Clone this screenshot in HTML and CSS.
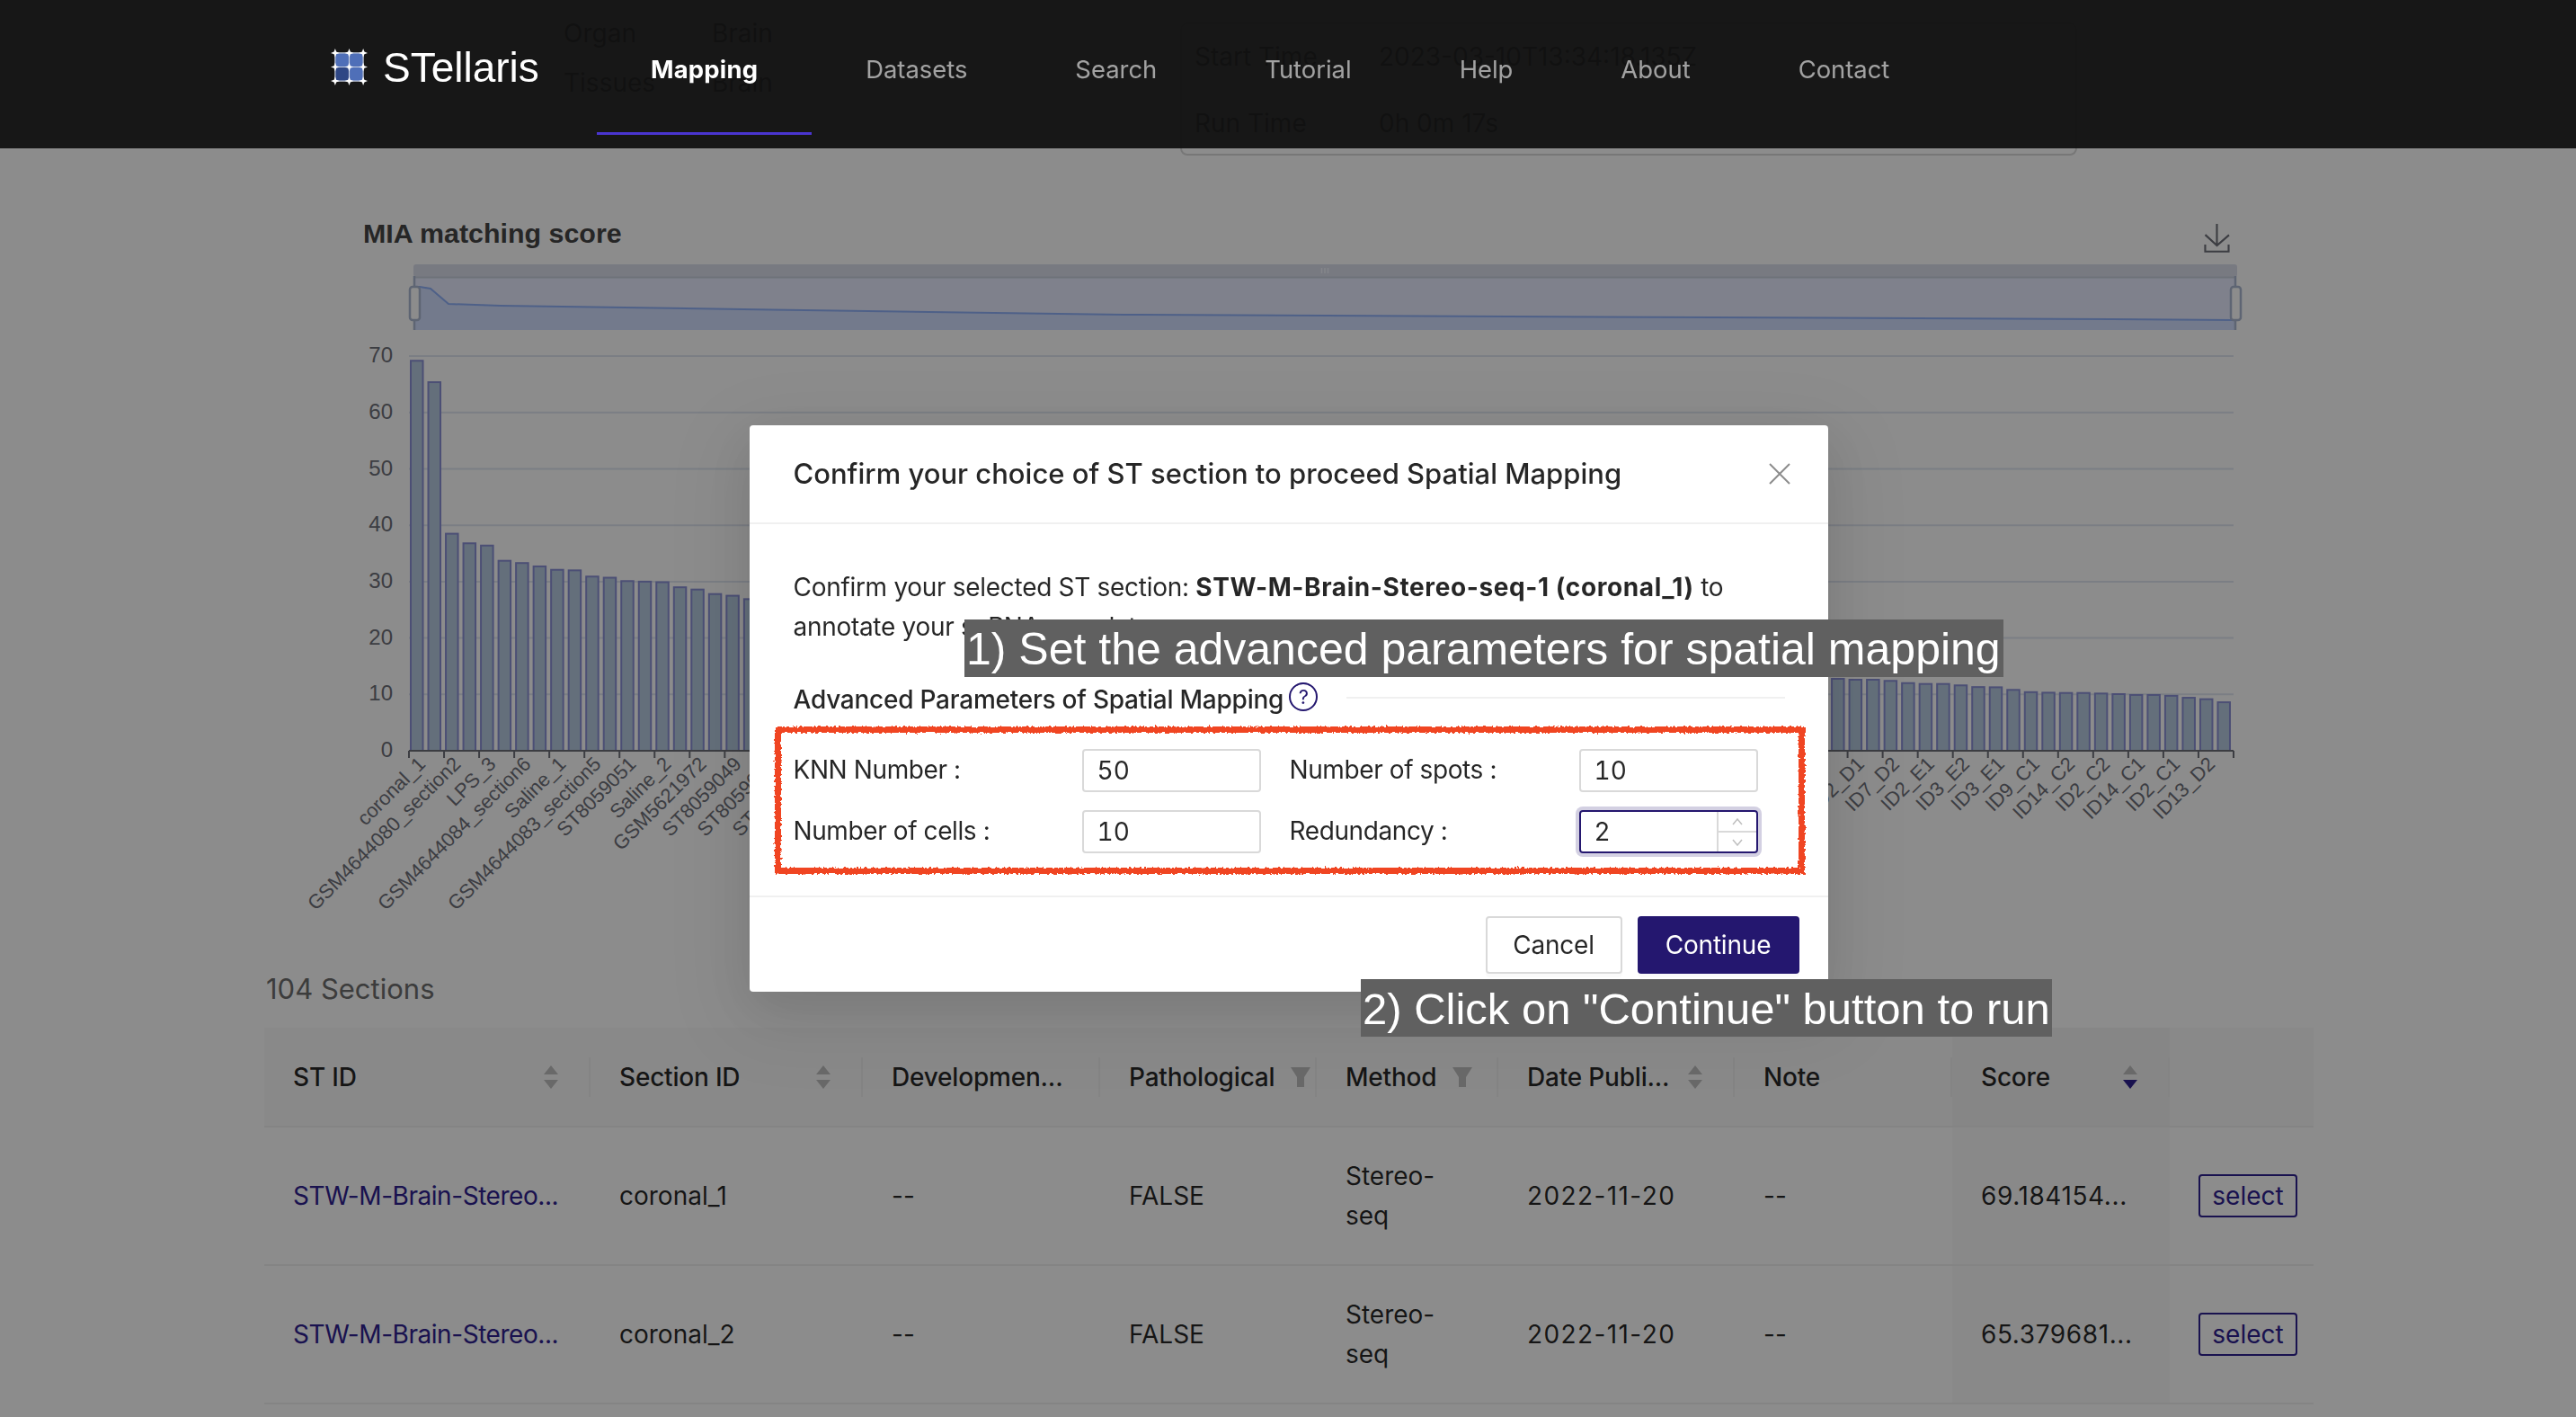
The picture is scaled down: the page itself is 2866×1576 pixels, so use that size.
FILE: index.html
```html
<!DOCTYPE html>
<html lang="en">
<head>
    <meta charset="UTF-8">
    <meta name="viewport" content="width=device-width, initial-scale=1.0">
    <title>STellaris - Mapping</title>
    <link rel="stylesheet" href="styles.css">
</head>
<body>
    <header class="topbar">
        <a class="logo" href="#">
            <svg class="logo-mark" viewBox="0 0 42 42">
                <rect x="5" y="5" width="15.5" height="15.5" fill="#4f6fb8"/>
                <rect x="21.5" y="5" width="15.5" height="15.5" fill="#4f6fb8"/>
                <rect x="5" y="21.5" width="15.5" height="15.5" fill="#2f4785"/>
                <rect x="21.5" y="21.5" width="15.5" height="15.5" fill="#4f6fb8"/>
                <path d="M5 5H37V37H5ZM21 5V37M5 21H37" fill="none" stroke="#c9cfdd" stroke-width="1.2"/>
                <g fill="#fff">
                    <path d="M5 0L6.3 3.7L10 5L6.3 6.3L5 10L3.7 6.3L0 5L3.7 3.7Z"/>
                    <path d="M21 0L22.3 3.7L26 5L22.3 6.3L21 10L19.7 6.3L16 5L19.7 3.7Z"/>
                    <path d="M37 0L38.3 3.7L42 5L38.3 6.3L37 10L35.7 6.3L32 5L35.7 3.7Z"/>
                    <path d="M5 16L6.3 19.7L10 21L6.3 22.3L5 26L3.7 22.3L0 21L3.7 19.7Z"/>
                    <path d="M21 16L22.3 19.7L26 21L22.3 22.3L21 26L19.7 22.3L16 21L19.7 19.7Z"/>
                    <path d="M37 16L38.3 19.7L42 21L38.3 22.3L37 26L35.7 22.3L32 21L35.7 19.7Z"/>
                    <path d="M5 32L6.3 35.7L10 37L6.3 38.3L5 42L3.7 38.3L0 37L3.7 35.7Z"/>
                    <path d="M21 32L22.3 35.7L26 37L22.3 38.3L21 42L19.7 38.3L16 37L19.7 35.7Z"/>
                    <path d="M37 32L38.3 35.7L42 37L38.3 38.3L37 42L35.7 38.3L32 37L35.7 35.7Z"/>
                </g>
            </svg>
            <span class="logo-text">STellaris</span>
        </a>
        <nav class="menu">
            <a class="menu-item active" href="#">Mapping</a>
            <a class="menu-item" href="#">Datasets</a>
            <a class="menu-item" href="#">Search</a>
            <a class="menu-item" href="#">Tutorial</a>
            <a class="menu-item" href="#">Help</a>
            <a class="menu-item" href="#">About</a>
            <a class="menu-item" href="#">Contact</a>
        </nav>
    </header>

    <main class="page">
        <section class="job-info">
            <dl class="sample-info">
                <dt>Organ</dt><dd>Brain</dd>
                <dt>Tissues</dt><dd>Brain</dd>
            </dl>
            <div class="run-card">
                <div class="run-row"><span class="run-label">Start Time</span><span>2023-03-10T13:34:18.135Z</span></div>
                <div class="run-row"><span class="run-label">Run Time</span><span>0h 0m 17s</span></div>
            </div>
        </section>

        <svg id="score-chart" class="chart" viewBox="294 230 2280 830">
            <text class="chart-title" x="404" y="270">MIA matching score</text>
            <path class="save-icon" transform="translate(2451 249) scale(.53)" d="M4.7 22.9L29.3 45.5L54.7 23.4M4.6 43.6L4.6 58L53.8 58L53.8 43.6M29.2 45.1L29.2 0"/>
            <rect class="zoom-strip" x="460" y="294" width="2029" height="14" rx="3"/>
            <rect class="zoom-body" x="460" y="309" width="2028" height="58"/>
            <path class="zoom-area" d="M461 319L467 319L479 321L499 338L557 340L860 344.5L1250 350L2350 355L2487 356V367H461Z"/>
            <path class="zoom-line" d="M461 319L467 319L479 321L499 338L557 340L860 344.5L1250 350L2350 355L2487 356"/>
            <path class="zoom-rule" d="M460 308.5H2488"/>
            <path class="zoom-grip" d="M1470.5 298V304M1474 298V304M1477.5 298V304"/>
            <path class="zoom-edge" d="M461 307V367M2487 307V367"/>
            <rect class="zoom-handle" x="456" y="319" width="11" height="37" rx="3"/>
            <rect class="zoom-handle" x="2482" y="319" width="11" height="37" rx="3"/>
        </svg>

        <h2 class="section-count">104 Sections</h2>

        <table class="sections">
            <thead>
                <tr>
                    <th class="col-id"><div class="th-inner">ST ID
                        <svg class="sorter" viewBox="0 0 18 26"><path d="M9 0L17 10H1Z"/><path d="M9 26L1 16H17Z"/></svg></div></th>
                    <th class="col-section"><div class="th-inner">Section ID
                        <svg class="sorter" viewBox="0 0 18 26"><path d="M9 0L17 10H1Z"/><path d="M9 26L1 16H17Z"/></svg></div></th>
                    <th class="col-stage"><div class="th-inner">Developmen...</div></th>
                    <th class="col-path"><div class="th-inner">Pathological
                        <svg class="funnel" viewBox="0 0 22 22"><path d="M0 0H22L15 11V22H7V11Z"/></svg></div></th>
                    <th class="col-method"><div class="th-inner">Method
                        <svg class="funnel" viewBox="0 0 22 22"><path d="M0 0H22L15 11V22H7V11Z"/></svg></div></th>
                    <th class="col-date"><div class="th-inner">Date Publi...
                        <svg class="sorter" viewBox="0 0 18 26"><path d="M9 0L17 10H1Z"/><path d="M9 26L1 16H17Z"/></svg></div></th>
                    <th class="col-note"><div class="th-inner">Note</div></th>
                    <th class="col-score sorted"><div class="th-inner">Score
                        <svg class="sorter" viewBox="0 0 18 26"><path d="M9 0L17 10H1Z"/><path class="on" d="M9 26L1 16H17Z"/></svg></div></th>
                    <th class="col-action"></th>
                </tr>
            </thead>
            <tbody>
                <tr>
                    <td class="nowrap"><a href="#">STW-M-Brain-Stereo...</a></td>
                    <td>coronal_1</td>
                    <td>--</td>
                    <td>FALSE</td>
                    <td>Stereo-seq</td>
                    <td class="date">2022-11-20</td>
                    <td>--</td>
                    <td class="sorted score">69.184154...</td>
                    <td><button class="select-btn">select</button></td>
                </tr>
                <tr>
                    <td class="nowrap"><a href="#">STW-M-Brain-Stereo...</a></td>
                    <td>coronal_2</td>
                    <td>--</td>
                    <td>FALSE</td>
                    <td>Stereo-seq</td>
                    <td class="date">2022-11-20</td>
                    <td>--</td>
                    <td class="sorted score">65.379681...</td>
                    <td><button class="select-btn">select</button></td>
                </tr>
            </tbody>
        </table>
    </main>

    <div class="mask">
        <div class="modal">
            <div class="modal-head">
                <h3>Confirm your choice of ST section to proceed Spatial Mapping</h3>
                <svg class="modal-close" viewBox="0 0 24 24"><path d="M1 1L23 23M23 1L1 23"/></svg>
            </div>
            <div class="modal-body">
                <p>Confirm your selected ST section: <b>STW-M-Brain-Stereo-seq-1 (coronal_1)</b> to annotate your scRNA-seq data.</p>
                <div class="divider-title">
                    <span>Advanced Parameters of Spatial Mapping</span>
                    <span class="help-dot">?</span>
                    <i class="divider-line"></i>
                </div>
                <div class="param-grid">
                    <div class="param"><label>KNN Number :</label><div class="num"><input value="50"></div></div>
                    <div class="param"><label>Number of spots :</label><div class="num"><input value="10"></div></div>
                    <div class="param"><label>Number of cells :</label><div class="num"><input value="10"></div></div>
                    <div class="param"><label>Redundancy :</label>
                        <div class="num focused">
                            <input value="2">
                            <div class="steps">
                                <span class="step"><svg viewBox="0 0 12 8"><path d="M1 7L6 1L11 7"/></svg></span>
                                <span class="step"><svg viewBox="0 0 12 8"><path d="M1 1L6 7L11 1"/></svg></span>
                            </div>
                        </div>
                    </div>
                </div>
            </div>
            <div class="modal-foot">
                <button class="btn">Cancel</button>
                <button class="btn btn-primary">Continue</button>
            </div>
        </div>
    </div>

    <!-- annotations drawn over the screenshot -->
    <svg class="filter-defs">
        <filter id="rough">
            <feTurbulence type="fractalNoise" baseFrequency="0.35" numOctaves="2" seed="4"/>
            <feDisplacementMap in="SourceGraphic" scale="5"/>
        </filter>
    </svg>
    <div class="red-box"></div>
    <div class="note note-one">1) Set the advanced parameters for spatial mapping</div>
    <div class="note note-two">2) Click on "Continue" button to run</div>

    <script src="chart.js"></script>
</body>
</html>
```

FILE: styles.css
```css
* {
    box-sizing: border-box;
}

html, body {
    height: 1576px;
    overflow: hidden;
}

body {
    margin: 0;
    background-color: white;
    color: rgba(0, 0, 0, 0.85);
    font-family: Inter, "Noto Sans", sans-serif;
    font-size: 28px;
    line-height: 44px;
}

a {
    text-decoration: none;
}

/* top bar */
.topbar {
    position: fixed;
    top: 0;
    left: 0;
    right: 0;
    z-index: 20;
    height: 165px;
    padding-left: 368px;
    display: flex;
    background-color: rgba(17, 17, 17, 0.95);
}

.logo {
    width: 296px;
    height: 150px;
    display: flex;
    align-items: center;
    gap: 17px;
    color: white;
}

.logo-mark {
    width: 41px;
    height: 41px;
    margin-bottom: 2px;
}

.logo-text {
    font-family: "Liberation Sans", Arial, sans-serif;
    font-size: 46px;
}

.menu {
    display: flex;
}

.menu-item {
    height: 150px;
    padding: 0 60px;
    line-height: 154px;
    font-size: 27.4px;
    color: rgba(255, 255, 255, 0.6);
    border-bottom: 3px solid transparent;
}

.menu-item.active {
    color: white;
    font-weight: 700;
    letter-spacing: 0.2px;
    border-bottom-color: #4a35d0;
}

/* page under the mask */
.page {
    padding: 0 292px 0 294px;
}

.job-info {
    height: 173px;
    display: flex;
    justify-content: space-between;
    align-items: flex-end;
}

.sample-info {
    align-self: flex-start;
    margin: 10px 0 0 333px;
    display: grid;
    grid-template-columns: 165px 165px;
    line-height: 55px;
}

.sample-info dd {
    margin: 0;
}

.run-card {
    width: 998px;
    height: 148px;
    margin-right: 263px;
    border: 2px solid #d9d9d9;
    border-radius: 8px;
    padding: 0 14px;
}

.run-row {
    height: 73px;
    display: flex;
    align-items: center;
    border-bottom: 2px solid #f0f0f0;
    margin: 0 -14px;
    padding: 0 14px;
}

.run-row:last-child {
    border-bottom: none;
}

.run-label {
    width: 205px;
}

.chart {
    display: block;
    width: 2280px;
    height: 830px;
    margin-top: 57px;
}

.chart-title {
    font-family: "Liberation Sans", Arial, sans-serif;
    font-size: 30.4px;
    font-weight: 700;
    fill: #464646;
}

.save-icon {
    fill: none;
    stroke: #6e7079;
    stroke-width: 4;
}

.zoom-strip {
    fill: #dadeec;
}

.zoom-body {
    fill: #e7ecff;
}

.zoom-area {
    fill: #d1deff;
}

.zoom-line {
    fill: none;
    stroke: #8fb0f7;
    stroke-width: 2;
}

.zoom-rule {
    stroke: #c8cfdd;
    stroke-width: 2;
}

.zoom-grip {
    stroke: #f2f5fb;
    stroke-width: 1.5;
}

.zoom-edge {
    stroke: #acb8d1;
    stroke-width: 2.5;
}

.zoom-handle {
    fill: white;
    stroke: #acb8d1;
    stroke-width: 2.5;
}

.grid-line {
    stroke: #e0e6f1;
    stroke-width: 2;
}

.bar {
    fill: #b6cbe0;
    stroke: #8a90d6;
    stroke-width: 2;
}

.axis-line {
    stroke: #6e7079;
    stroke-width: 2;
    fill: none;
}

.axis-text {
    font-family: "Liberation Sans", Arial, sans-serif;
    fill: #6e7079;
}

.y-text {
    font-size: 24px;
}

.x-text {
    font-size: 22px;
}

.section-count {
    margin: 0;
    height: 83px;
    line-height: 80px;
    font-size: 31px;
    font-weight: 400;
    padding-left: 2px;
    color: #6e6e6e;
}

.sections {
    width: 2280px;
    table-layout: fixed;
    border-collapse: collapse;
}

.col-id { width: 363px; }
.col-section { width: 303px; }
.col-stage { width: 264px; }
.col-path { width: 241px; }
.col-method { width: 202px; }
.col-date { width: 263px; }
.col-note { width: 242px; }
.col-score { width: 242px; }
.col-action { width: 160px; }

.sections th {
    height: 110px;
    padding: 0 0 0 32px;
    position: relative;
    text-align: left;
    font-weight: 500;
    letter-spacing: -0.2px;
    background-color: #fafafa;
    border-bottom: 2px solid #f0f0f0;
}

.sections th.sorted {
    background-color: #f5f5f5;
}

.sections th:not(:last-child)::after {
    content: "";
    position: absolute;
    right: 0;
    top: 33px;
    height: 44px;
    width: 2px;
    background-color: #f0f0f0;
}

.th-inner {
    display: flex;
    align-items: center;
    padding-right: 35px;
}

.sorter {
    width: 18px;
    height: 26px;
    margin-left: auto;
    fill: #bfbfbf;
}

.sorter .on {
    fill: #2f2190;
}

.funnel {
    width: 22px;
    height: 22px;
    margin-left: 18px;
    flex-shrink: 0;
    fill: #bfbfbf;
}

.col-path .th-inner {
    padding-right: 0;
}

.sections td {
    height: 154px;
    padding: 0 32px;
    border-bottom: 2px solid #f0f0f0;
}

.sections td.nowrap {
    padding-right: 0;
    white-space: nowrap;
    letter-spacing: -0.45px;
}

.sections td.sorted {
    background-color: #fafafa;
}

.sections td.date {
    letter-spacing: 1.4px;
}

.sections td.score {
    letter-spacing: 0.6px;
}

.sections a {
    color: #2f2190;
}

.select-btn {
    width: 110px;
    height: 48px;
    padding: 0;
    font: inherit;
    line-height: 44px;
    color: #2f2190;
    background-color: white;
    border: 2px solid #2f2190;
    border-radius: 4px;
}

/* confirm dialog */
.mask {
    position: fixed;
    top: 0;
    left: 0;
    right: 0;
    bottom: 0;
    z-index: 10;
    padding-top: 473px;
    display: flex;
    justify-content: center;
    align-items: flex-start;
    background-color: rgba(0, 0, 0, 0.45);
}

.modal {
    width: 1200px;
    margin-left: 1px;
    background-color: white;
    border-radius: 4px;
    box-shadow: 0 18px 56px rgba(0, 0, 0, 0.1), 0 24px 96px 32px rgba(0, 0, 0, 0.06);
}

.modal-head {
    height: 110px;
    padding: 0 42px 0 49px;
    display: flex;
    align-items: center;
    justify-content: space-between;
    border-bottom: 2px solid #f0f0f0;
}

.modal-head h3 {
    margin: 0;
    font-size: 31px;
    font-weight: 500;
}

.modal-close {
    width: 24px;
    height: 24px;
    fill: none;
    stroke: rgba(0, 0, 0, 0.45);
    stroke-width: 2;
}

.modal-body {
    padding: 48px 48px 47px;
    border-bottom: 2px solid #f0f0f0;
}

.modal-body p {
    margin: 0 0 0 1px;
    width: 1060px;
    letter-spacing: -0.3px;
}

.modal-body b {
    letter-spacing: 0.6px;
}

.divider-title {
    margin: 37px 0 0 1px;
    height: 44px;
    display: flex;
    align-items: center;
    font-weight: 500;
    letter-spacing: -0.24px;
}

.help-dot {
    width: 32px;
    height: 32px;
    margin: -6px 0 0 6px;
    border: 2px solid #24176f;
    border-radius: 50%;
    color: #24176f;
    font-size: 22px;
    font-weight: 400;
    line-height: 28px;
    text-align: center;
}

.divider-line {
    flex-grow: 1;
    height: 2px;
    margin: -4px 0 0 32px;
    background-color: #f0f0f0;
}

.param-grid {
    margin-top: 33px;
    display: grid;
    grid-template-columns: 521px 521px;
    column-gap: 32px;
    row-gap: 20px;
}

.param {
    display: grid;
    grid-template-columns: 322px 199px;
    align-items: center;
}

.param label {
    padding: 0 0 3px 1px;
    letter-spacing: -0.4px;
}

.param:nth-child(even) label {
    padding-left: 0;
}

.num {
    height: 48px;
    display: flex;
    border: 2px solid #d9d9d9;
    border-radius: 4px;
}

.num input {
    flex-grow: 1;
    width: 0;
    border: none;
    outline: none;
    padding: 0 0 0 15px;
    font: inherit;
    font-variant-numeric: tabular-nums;
    color: rgba(0, 0, 0, 0.85);
    background: transparent;
}

.num.focused {
    border-color: #24176f;
    box-shadow: 0 0 0 4px #d3d0e2;
}

.steps {
    width: 44px;
    flex-shrink: 0;
    display: flex;
    flex-direction: column;
    border-left: 2px solid #d9d9d9;
}

.step {
    flex: 1;
    display: flex;
    align-items: center;
    justify-content: center;
}

.step:first-child {
    border-bottom: 2px solid #d9d9d9;
}

.step svg {
    width: 12px;
    height: 8px;
    fill: none;
    stroke: #bfbfbf;
    stroke-width: 1.5;
}

.modal-foot {
    height: 105px;
    padding: 21px 32px 0 0;
    display: flex;
    justify-content: flex-end;
    gap: 17px;
}

.btn {
    height: 64px;
    padding: 0;
    width: 152px;
    font: inherit;
    letter-spacing: -0.2px;
    color: rgba(0, 0, 0, 0.85);
    background-color: white;
    border: 2px solid #d9d9d9;
    border-radius: 4px;
    box-shadow: 0 4px 0 rgba(0, 0, 0, 0.02);
}

.btn-primary {
    width: 180px;
    color: white;
    background-color: #24176f;
    border-color: #24176f;
}

/* annotations */
.filter-defs {
    position: absolute;
    width: 0;
    height: 0;
}

.red-box {
    position: absolute;
    z-index: 30;
    left: 862px;
    top: 808px;
    width: 1146px;
    height: 164px;
    border: 7px solid #f04423;
    filter: url(#rough);
}

.note {
    position: absolute;
    z-index: 30;
    height: 64px;
    padding-left: 2px;
    background-color: #606060;
    color: white;
    font-family: "Liberation Sans", Arial, sans-serif;
    font-size: 50px;
    line-height: 66px;
    white-space: nowrap;
}

.note-one {
    left: 1073px;
    top: 689px;
    width: 1156px;
}

.note-two {
    left: 1514px;
    top: 1089px;
    width: 769px;
    font-size: 49px;
}
```

FILE: chart.js
```js
const chart = document.getElementById('score-chart');
const SVG_NS = 'http://www.w3.org/2000/svg';

const AXIS_X = 455;
const AXIS_END = 2485;
const AXIS_Y = 835;
const STEP_Y = 6.27;
const BAR_STEP = (AXIS_END - AXIS_X) / 104;

// scores read off the plot, the stretch behind the dialog is filled in
const head = [69.18, 65.38, 38.5, 36.8, 36.4, 33.7, 33.3, 32.7, 32.1, 32.0, 30.9, 30.7, 30.1, 30.0, 29.9, 29.0, 28.6, 27.8, 27.5, 26.9];
const tail = [12.76, 12.6, 12.6, 12.4, 12.0, 11.85, 11.85, 11.6, 11.3, 11.26, 10.8, 10.4, 10.3, 10.25, 10.25, 10.15, 10.05, 9.9, 9.9, 9.75, 9.4, 9.15, 8.6];
const scores = [...head];
for (let i = 0; i < 61; i++) {
    scores.push(26.9 - (i + 1) * (26.9 - 12.76) / 62);
}
scores.push(...tail);

const labels = {
    0: 'coronal_1', 2: 'GSM4644080_section2', 4: 'LPS_3', 6: 'GSM4644084_section6',
    8: 'Saline_1', 10: 'GSM4644083_section5', 12: 'ST8059051', 14: 'Saline_2',
    16: 'GSM5621972', 18: 'ST8059049', 20: 'ST8059050', 22: 'ST8059048',
    82: 'ID2_D1', 84: 'ID7_D2', 86: 'ID2_E1', 88: 'ID3_E2', 90: 'ID3_E1',
    92: 'ID9_C1', 94: 'ID14_C2', 96: 'ID2_C2', 98: 'ID14_C1', 100: 'ID2_C1', 102: 'ID13_D2'
};

function add(tag, attrs, text) {
    const el = document.createElementNS(SVG_NS, tag);
    Object.keys(attrs).forEach((key) => el.setAttribute(key, attrs[key]));
    if (text !== undefined) el.textContent = text;
    chart.appendChild(el);
    return el;
}

for (let v = 0; v <= 70; v += 10) {
    const y = AXIS_Y - v * STEP_Y;
    if (v > 0) add('line', { class: 'grid-line', x1: AXIS_X, x2: AXIS_END, y1: y, y2: y });
    add('text', { class: 'axis-text y-text', x: 437, y: y + 7, 'text-anchor': 'end' }, v);
}

scores.forEach((score, i) => {
    const top = AXIS_Y - score * STEP_Y;
    add('rect', { class: 'bar', x: AXIS_X + i * BAR_STEP + 2, y: top, width: 13.5, height: AXIS_Y - top });
});

add('line', { class: 'axis-line', x1: AXIS_X, x2: AXIS_END, y1: AXIS_Y, y2: AXIS_Y });
for (let i = 0; i <= 104; i += 2) {
    const x = AXIS_X + i * BAR_STEP;
    add('line', { class: 'axis-line', x1: x, x2: x, y1: AXIS_Y, y2: AXIS_Y + 8 });
    if (labels[i]) {
        const cx = x + BAR_STEP / 2 + 10;
        const ty = AXIS_Y + 16;
        add('text', {
            class: 'axis-text x-text',
            x: cx,
            y: ty,
            'text-anchor': 'end',
            transform: `rotate(-45 ${cx} ${ty})`
        }, labels[i]);
    }
}
```
